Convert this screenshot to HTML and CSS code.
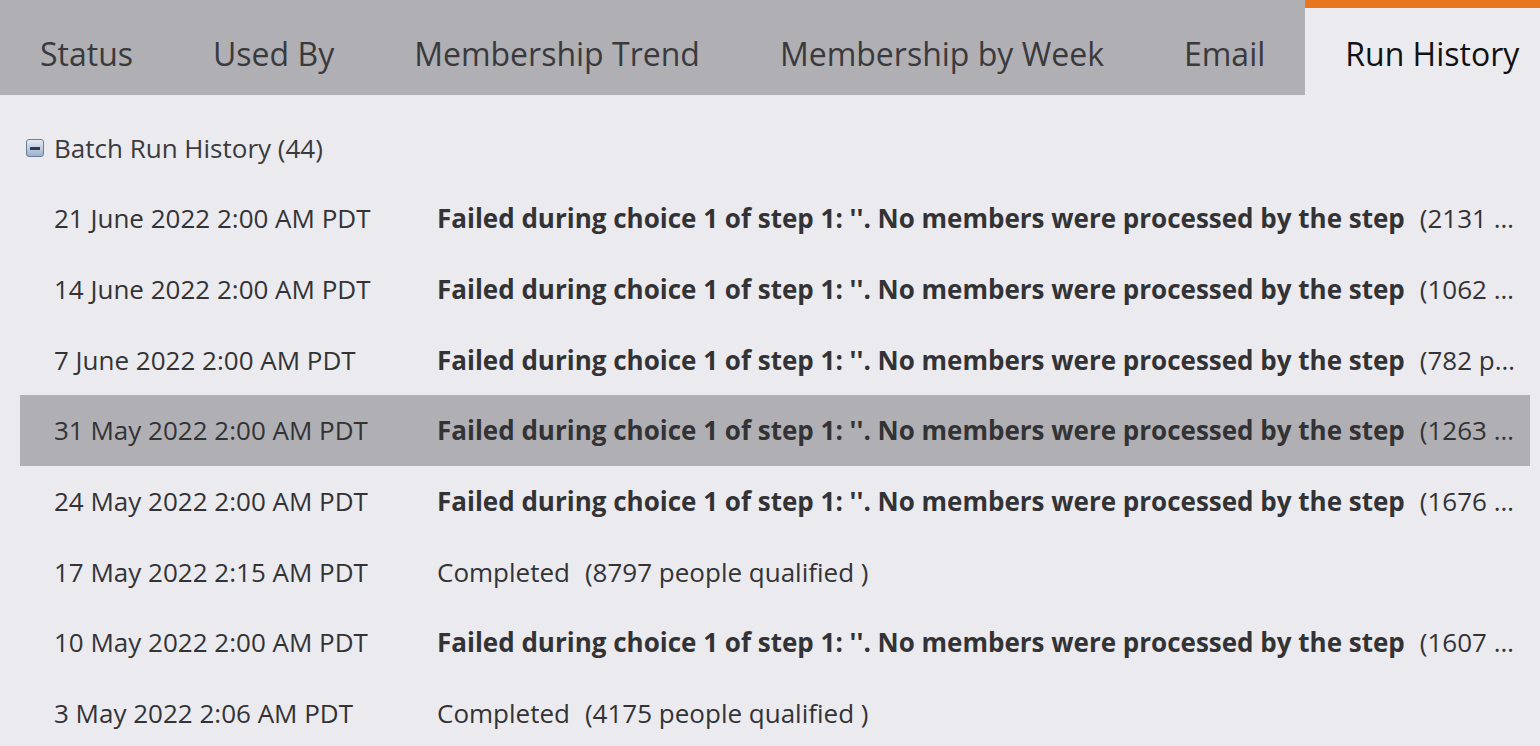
FILE: index.html
```html
<!DOCTYPE html>
<html>
<head>
<meta charset="utf-8">
<link rel="stylesheet" href="styles.css">
</head>
<body>
<div class="page">
  <nav class="tabs">
    <div class="tab">Status</div>
    <div class="tab">Used By</div>
    <div class="tab">Membership Trend</div>
    <div class="tab">Membership by Week</div>
    <div class="tab">Email</div>
    <div class="tab active">Run History</div>
  </nav>
  <section class="content">
    <div class="group-head">
      <span class="toggle"><span class="minus"></span></span>
      <span class="group-title">Batch Run History (44)</span>
    </div>
    <div class="rows">
      <div class="row"><div class="date">21 June 2022 2:00 AM PDT</div><div class="msg"><b>Failed during choice 1 of step 1: ''. No members were processed by the step</b><span class="count">(2131 …</span></div></div>
      <div class="row"><div class="date">14 June 2022 2:00 AM PDT</div><div class="msg"><b>Failed during choice 1 of step 1: ''. No members were processed by the step</b><span class="count">(1062 …</span></div></div>
      <div class="row"><div class="date">7 June 2022 2:00 AM PDT</div><div class="msg"><b>Failed during choice 1 of step 1: ''. No members were processed by the step</b><span class="count">(782 p…</span></div></div>
      <div class="row selected"><div class="date">31 May 2022 2:00 AM PDT</div><div class="msg"><b>Failed during choice 1 of step 1: ''. No members were processed by the step</b><span class="count">(1263 …</span></div></div>
      <div class="row"><div class="date">24 May 2022 2:00 AM PDT</div><div class="msg"><b>Failed during choice 1 of step 1: ''. No members were processed by the step</b><span class="count">(1676 …</span></div></div>
      <div class="row"><div class="date">17 May 2022 2:15 AM PDT</div><div class="msg">Completed<span class="count">(8797 people qualified )</span></div></div>
      <div class="row"><div class="date">10 May 2022 2:00 AM PDT</div><div class="msg"><b>Failed during choice 1 of step 1: ''. No members were processed by the step</b><span class="count">(1607 …</span></div></div>
      <div class="row"><div class="date">3 May 2022 2:06 AM PDT</div><div class="msg">Completed<span class="count">(4175 people qualified )</span></div></div>
    </div>
  </section>
</div>
</body>
</html>
```

FILE: styles.css
```css
* { box-sizing: border-box; }
html, body {
  margin: 0;
  padding: 0;
  width: 1540px;
  height: 746px;
  overflow: hidden;
  background: #ebeaef;
  font-family: "Open Sans", "Noto Sans", sans-serif;
  color: #333336;
}
.page {
  width: 1540px;
  height: 746px;
  overflow: hidden;
}
.tabs {
  display: flex;
  height: 95px;
  background: #b0afb4;
  white-space: nowrap;
  overflow: hidden;
}
.tab {
  flex: none;
  padding: 13px 40px 0;
  height: 95px;
  line-height: 81px;
  font-size: 32px;
  color: #3a3a3d;
}
.tab.active {
  background: #ebeaef;
  border-top: 8px solid #e8761c;
  padding-top: 5px;
  color: #111;
}
.content {
  padding: 29px 10px 0 20px;
}
.group-head {
  display: flex;
  align-items: center;
  height: 48px;
  padding-left: 6px;
}
.toggle {
  width: 18px;
  height: 18px;
  border: 1px solid #6b7d9a;
  border-radius: 3px;
  background: linear-gradient(#e4eaf4, #9cb0cf);
  display: flex;
  align-items: center;
  justify-content: center;
  margin-right: 10px;
}
.minus {
  width: 10px;
  height: 3px;
  background: #2f3a4e;
}
.group-title {
  font-size: 26px;
  color: #3a3a3d;
}
.rows {
  margin-top: 11px;
}
.row {
  display: flex;
  align-items: center;
  height: 70.7px;
  font-size: 26px;
  white-space: nowrap;
}
.row.selected {
  background: #b0afb4;
}
.date {
  flex: none;
  width: 417px;
  padding-left: 34px;
  color: #333336;
}
.msg {
  flex: 1;
  min-width: 0;
  color: #333336;
}
.msg b {
  font-weight: 700;
}
.count {
  margin-left: 15px;
}
```
